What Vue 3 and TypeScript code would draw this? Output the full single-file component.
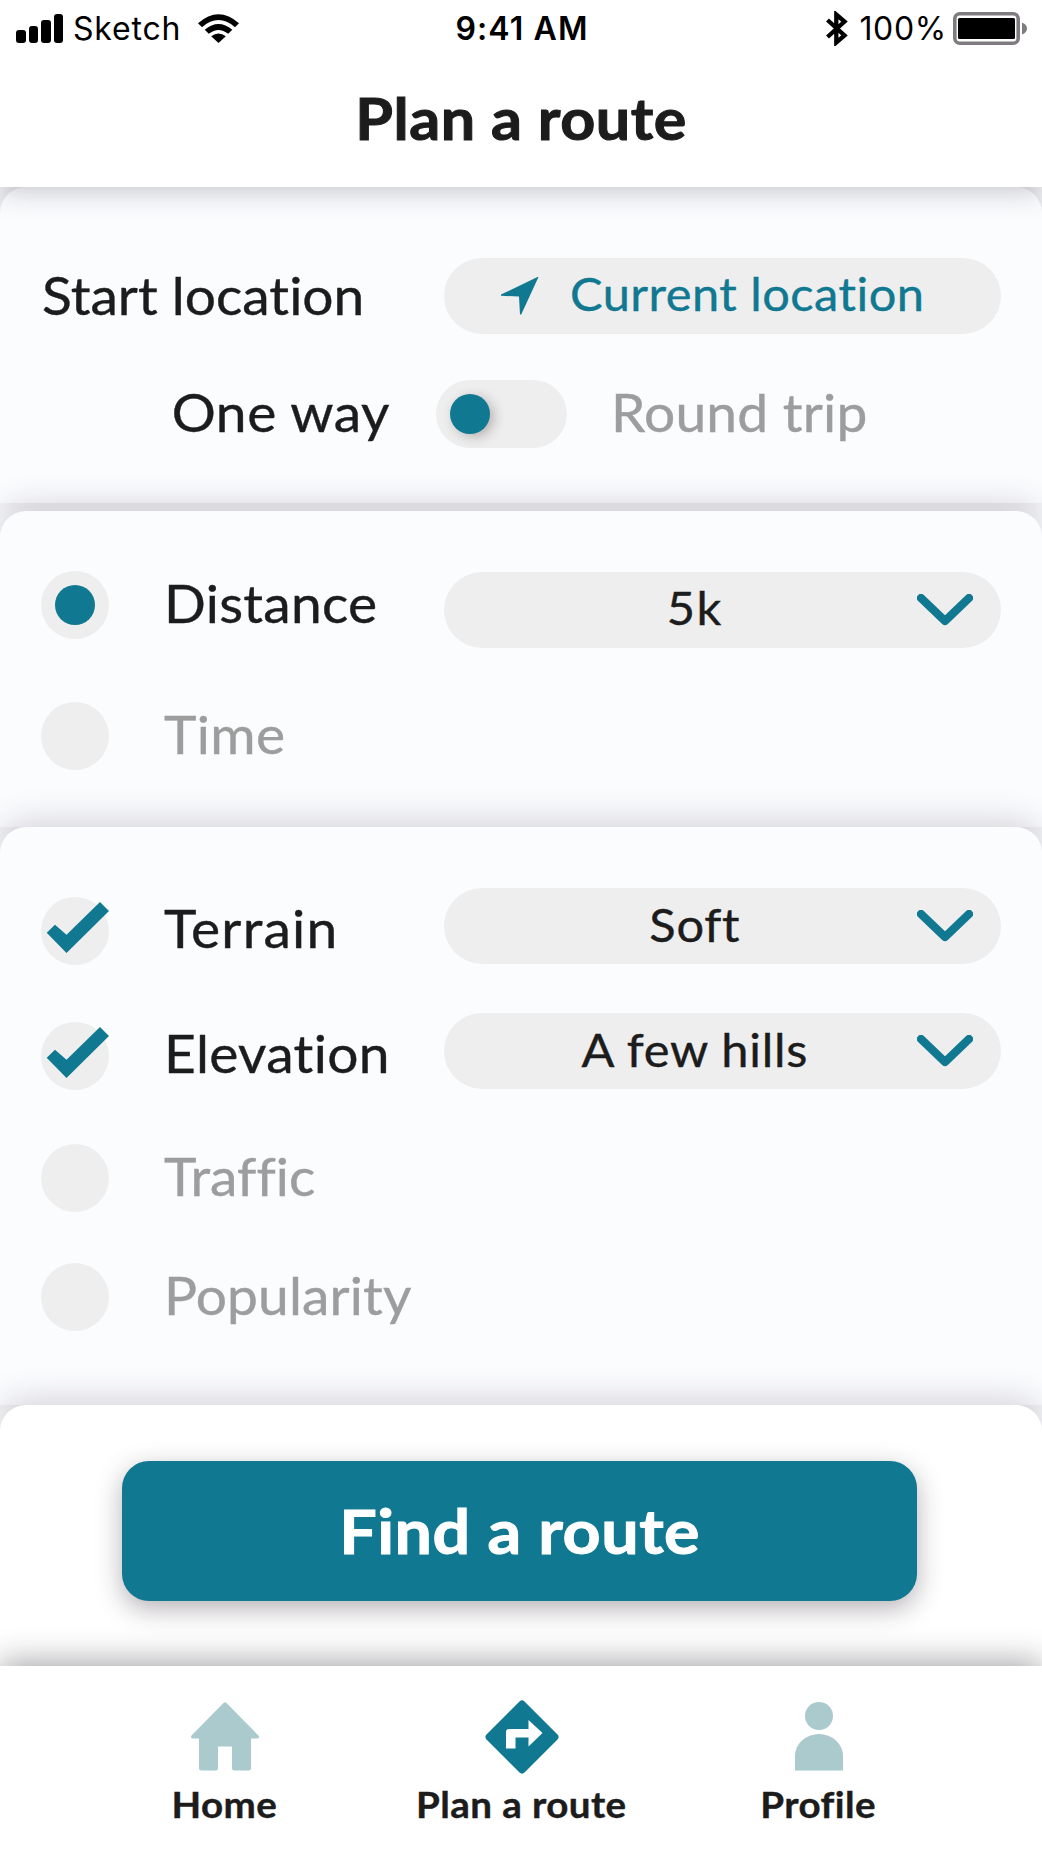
<script setup lang="ts">
import { ref } from 'vue'

interface Option {
  id: string
  label: string
  checked: boolean
  value?: string
}

const goals = ref<Option[]>([
  { id: 'distance', label: 'Distance', checked: true, value: '5k' },
  { id: 'time', label: 'Time', checked: false },
])

const filters = ref<Option[]>([
  { id: 'terrain', label: 'Terrain', checked: true, value: 'Soft' },
  { id: 'elevation', label: 'Elevation', checked: true, value: 'A few hills' },
  { id: 'traffic', label: 'Traffic', checked: false },
  { id: 'popularity', label: 'Popularity', checked: false },
])

const roundTrip = ref(false)

function selectGoal(id: string) {
  goals.value.forEach((goal) => (goal.checked = goal.id === id))
}
</script>

<template>
  <div class="screen">
    <header class="header">
      <div class="status">
        <div class="status-left">
          <svg class="signal" width="47" height="29" viewBox="0 0 47 29">
            <rect x="0" y="16" width="10" height="13" rx="3" />
            <rect x="13" y="12" width="9" height="17" rx="3" />
            <rect x="25" y="6" width="10" height="23" rx="3" />
            <rect x="38" y="0" width="9" height="29" rx="3" />
          </svg>
          <span class="carrier">Sketch</span>
          <svg class="wifi" width="41" height="29" viewBox="0 0 41 29">
            <path d="M0 9.2Q20.500-8.800 41 9.200L37 13.200Q20.500-1 4 13.200Z" />
            <path d="M6.700 15.800Q20.500 4 34.300 15.800L30.200 19.800Q20.500 12 10.800 19.800Z" />
            <path d="M13.200 22.300Q20.500 16.800 27.800 22.300L20.500 29Z" />
          </svg>
        </div>
        <span class="clock">9:41 AM</span>
        <div class="status-right">
          <svg class="bluetooth" width="22" height="35" viewBox="0 0 22 35">
            <path d="M1.500 9L18.500 24.500L10.300 31.500V3.500L18.500 10.500L1.500 26" />
          </svg>
          <span class="percent">100%</span>
          <svg class="battery" width="75" height="33" viewBox="0 0 75 33">
            <rect x="1.800" y="1.800" width="63.400" height="29.400" rx="5" class="battery-frame" />
            <rect x="5" y="6" width="57" height="21" rx="1.500" />
            <path d="M69 10.500Q74 12.500 74 16.500T69 22.500Z" class="battery-nub" />
          </svg>
        </div>
      </div>
      <h1 class="title">Plan a route</h1>
    </header>

    <section class="card start">
      <div class="start-row">
        <span class="label start-label">Start location</span>
        <button class="pill location">
          <svg width="38" height="38" viewBox="0 0 38 38">
            <path d="M37.500 0L20.200 37.500H19L18 19.500L0 18.800V17.600L36.500 0Z" />
          </svg>
          <span class="location-text">Current location</span>
        </button>
      </div>
      <div class="trip-row">
        <span class="label one-way" :class="{ off: roundTrip }">One way</span>
        <button class="toggle" :class="{ on: roundTrip }" aria-label="Round trip" @click="roundTrip = !roundTrip">
          <i class="knob"></i>
        </button>
        <span class="label round" :class="{ off: !roundTrip }">Round trip</span>
      </div>
    </section>

    <section class="card goals">
      <div v-for="goal in goals" :key="goal.id" class="row" :class="goal.id">
        <span class="mark" @click="selectGoal(goal.id)"><i v-if="goal.checked" class="dot"></i></span>
        <span class="label" :class="{ off: !goal.checked }">{{ goal.label }}</span>
        <button v-if="goal.value" class="pill">
          <span class="value">{{ goal.value }}</span>
          <svg class="chevron" width="56" height="32" viewBox="0 0 56 32">
            <path d="M4 4L28 27L52 4" />
          </svg>
        </button>
      </div>
    </section>

    <section class="card filters">
      <div v-for="filter in filters" :key="filter.id" class="row" :class="filter.id">
        <span class="mark" @click="filter.checked = !filter.checked">
          <svg v-if="filter.checked" width="68" height="68" viewBox="0 0 68 68">
            <path d="M5.700 35.700L14 27.700L25.500 37.700L59 5L68 14L25.500 56Z" />
          </svg>
        </span>
        <span class="label" :class="{ off: !filter.checked }">{{ filter.label }}</span>
        <button v-if="filter.value" class="pill">
          <span class="value">{{ filter.value }}</span>
          <svg class="chevron" width="56" height="32" viewBox="0 0 56 32">
            <path d="M4 4L28 27L52 4" />
          </svg>
        </button>
      </div>
    </section>

    <section class="card action">
      <button class="find"><span>Find a route</span></button>
    </section>

    <nav class="tabs">
      <a class="tab home">
        <svg width="68" height="74" viewBox="0 0 68 74">
          <path d="M32.500 3Q34 1.500 35.500 3L67.500 35.500Q69 38.500 66 38.500H60V68Q60 70.500 57.500 70.500H43.500Q41 70.500 41 68V46.500H27V68Q27 70.500 24.500 70.500H10.500Q8 70.500 8 68V38.500H2Q-1 38.500 .5 35.500Z" />
        </svg>
        <span>Home</span>
      </a>
      <a class="tab plan active">
        <svg width="74" height="74" viewBox="0 0 74 74">
          <path d="M34.500 1.500Q37 -.8 39.500 1.500L72.500 34.500Q74.800 37 72.500 39.500L39.500 72.500Q37 74.800 34.500 72.500L1.500 39.500Q-.8 37 1.500 34.500Z" />
          <path class="turn" d="M21 48.500V32Q21 29 24 29H43.500V20L57.500 33L43.500 46.500V37.500H30.500V48.500Z" />
        </svg>
        <span>Plan a route</span>
      </a>
      <a class="tab profile">
        <svg width="48" height="74" viewBox="0 0 48 74">
          <circle cx="24" cy="16" r="14" />
          <path d="M0 70.500V56A24 22 0 0 1 48 56V70.500Z" />
        </svg>
        <span>Profile</span>
      </a>
    </nav>
  </div>
</template>

<style>
body {
  margin: 0;
  background: #fff;
}
</style>

<style scoped>
.screen {
  display: flex;
  flex-direction: column;
  width: 1042px;
  height: 1853px;
  overflow: hidden;
  background: #fbfcfe;
  color: #1c1c1c;
  font-family: Lato, "Liberation Sans", sans-serif;
  font-variant-ligatures: none;
  white-space: nowrap;
}

button {
  border: 0;
  padding: 0;
  font: inherit;
  color: inherit;
}

svg {
  display: block;
  flex: none;
}

.header {
  position: relative;
  z-index: 2;
  height: 187px;
  flex: none;
  background: #fff;
  box-shadow: 0 2px 28px rgba(30, 25, 40, 0.27);
}

.status {
  display: grid;
  grid-template-columns: 1fr auto 1fr;
  align-items: center;
  height: 57px;
  padding: 0 14px 0 16px;
  box-sizing: border-box;
  color: #000;
  font: 400 32px/40px Inter, sans-serif;
}

.status-left,
.status-right {
  display: flex;
  align-items: center;
}

.status-right {
  justify-content: flex-end;
}

.signal {
  margin-right: 10px;
}

.carrier {
  letter-spacing: 0.8px;
}

.wifi {
  margin-left: 17px;
}

.clock {
  font-weight: 600;
  letter-spacing: 1.1px;
}

.bluetooth {
  margin-right: 11px;
  fill: none;
  stroke: #000;
  stroke-width: 4.3;
}

.percent {
  letter-spacing: 0.7px;
}

.battery {
  margin-left: 6px;
}

.battery-frame {
  fill: none;
  stroke: #7f7b80;
  stroke-width: 3.6;
}

.battery-nub {
  fill: #7f7b80;
}

.title {
  margin: 0;
  padding-top: 27px;
  text-align: center;
  font-size: 57px;
  line-height: 68px;
  font-weight: 700;
  letter-spacing: 0.5px;
  transform: scaleX(1.07);
  -webkit-text-stroke: 1px currentColor;
}

.card {
  position: relative;
  box-sizing: border-box;
  flex: none;
  background: #fbfcfe;
  border-radius: 26px 26px 0 0;
  box-shadow: 0 -5px 34px rgba(40, 30, 55, 0.19);
}

.label {
  font-size: 52px;
  line-height: 62px;
}

.label,
.value,
.location-text {
  transform: scaleX(1.06);
  transform-origin: left;
  -webkit-text-stroke: 0.4px currentColor;
}

.off {
  color: #9d9d9d;
}

.pill {
  display: flex;
  align-items: center;
  width: 557px;
  height: 76px;
  border-radius: 38px;
  background: #eee;
  font-size: 46px;
  line-height: 56px;
}

.start {
  height: 316px;
  margin-bottom: 8px;
  padding: 71px 41px 0 42px;
}

.start-row {
  display: flex;
  align-items: center;
  justify-content: space-between;
}

.start-label {
  padding-bottom: 2px;
}

.location {
  color: #107891;
  fill: #107891;
}

.location svg {
  margin-left: 57px;
}

.location-text {
  margin-left: 31px;
  padding-bottom: 4px;
  letter-spacing: 0.45px;
}

.trip-row {
  display: grid;
  grid-template-columns: 348px 131px 1fr;
  column-gap: 46px;
  align-items: center;
  height: 68px;
  margin-top: 46px;
}

.one-way {
  padding-bottom: 4px;
  text-align: right;
  letter-spacing: 0.5px;
  transform-origin: right;
}

.round {
  margin-left: -2px;
  padding-bottom: 4px;
  letter-spacing: 0.2px;
}

.toggle {
  width: 131px;
  height: 68px;
  padding: 0 14px;
  border-radius: 34px;
  background: #eee;
  display: flex;
  align-items: center;
}

.toggle.on {
  justify-content: flex-end;
}

.knob,
.dot {
  width: 40px;
  height: 40px;
  border-radius: 50%;
  background: #107891;
}

.knob {
  box-shadow: 4px 3px 12px rgba(60, 40, 40, 0.3);
}

.row {
  display: grid;
  grid-template: 68px / 68px 221px 557px;
  column-gap: 57px;
  align-items: center;
  height: 68px;
}

.mark {
  display: flex;
  align-items: center;
  justify-content: center;
  width: 68px;
  height: 68px;
  border-radius: 50%;
  background: #eee;
  fill: #107891;
}

.row .label {
  margin-left: -2px;
  padding-bottom: 5px;
}

.value {
  flex: 1;
  padding-left: 27px;
  padding-bottom: 3px;
  text-align: center;
  letter-spacing: 0.7px;
  transform-origin: center;
}

.chevron {
  margin-right: 28px;
  fill: none;
  stroke: #107891;
  stroke-width: 8.2;
  stroke-linecap: round;
  stroke-linejoin: round;
}

.goals {
  height: 316px;
  padding: 60px 41px 0;
}

.filters {
  height: 578px;
  padding: 70px 41px 0;
}

.row .pill {
  margin-top: 9px;
}

.filters .row .pill {
  margin: 0 0 10px;
}

.distance .label {
  letter-spacing: 0.25px;
}

.distance .value {
  letter-spacing: 1.5px;
}

.time {
  margin-top: 63px;
}

.time .label {
  letter-spacing: 0.3px;
}

.terrain .label {
  padding-bottom: 6px;
  letter-spacing: 1.15px;
}

.elevation {
  margin-top: 57px;
}

.elevation .label {
  padding-bottom: 6px;
  letter-spacing: 0.3px;
}

.traffic {
  margin-top: 54px;
}

.popularity {
  margin-top: 51px;
}

.popularity .label {
  letter-spacing: 0.1px;
}

.action {
  height: 261px;
  padding: 56px 0 0 122px;
  background: #fff;
}

.find {
  display: block;
  width: 795px;
  height: 140px;
  padding-bottom: 2px;
  border-radius: 27px;
  background: #107891;
  color: #fff;
  font-size: 62px;
  font-weight: 700;
  letter-spacing: 0.5px;
  box-shadow: 0 8px 26px rgba(40, 30, 45, 0.34);
}

.find span {
  display: inline-block;
  transform: scaleX(1.07);
  -webkit-text-stroke: 1px currentColor;
}

.tabs {
  position: relative;
  flex: 1;
  display: flex;
  padding-top: 34px;
  background: #fff;
  box-shadow: 0 -4px 30px rgba(30, 25, 35, 0.4);
}

.tab {
  display: flex;
  flex-direction: column;
  align-items: center;
  width: 297px;
  fill: #aacacd;
  font-size: 36px;
  line-height: 44px;
  font-weight: 700;
  letter-spacing: 0.4px;
}

.tab span {
  margin-top: 8px;
  transform: scaleX(1.07);
  -webkit-text-stroke: 0.4px currentColor;
}

.tab.active {
  fill: #107891;
}

.tab .turn {
  fill: #fff;
}

.home {
  margin-left: 76px;
}
</style>
